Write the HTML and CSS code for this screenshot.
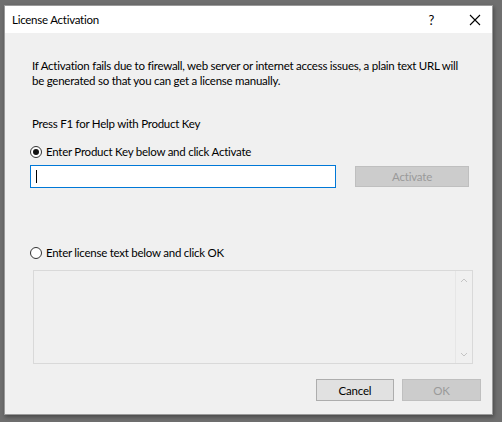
FILE: index.html
```html
<!DOCTYPE html>
<html lang="en">
<head>
    <meta charset="UTF-8">
    <meta name="viewport" content="width=device-width, initial-scale=1.0">
    <title>License Activation</title>
    <link rel="stylesheet" href="styles.css">
</head>
<body>
    <div class="dialog">
        <!-- Title bar -->
        <div class="titlebar">
            <span class="title">License Activation</span>
            <span class="help">?</span>
            <svg class="close" width="12" height="12" viewBox="0 0 12 12">
                <path d="M1 1 L11 11 M11 1 L1 11" stroke="#000" stroke-width="1.1" fill="none"/>
            </svg>
        </div>

        <div class="content">
            <p class="intro">If Activation fails due to firewall, web server or internet access issues, a plain text URL will be generated so that you can get a license manually.</p>

            <p class="hint">Press F1 for Help with Product Key</p>

            <label class="radio-row first">
                <span class="radio checked"></span>
                Enter Product Key below and click Activate
            </label>

            <div class="key-row">
                <div class="key-input"><span class="caret"></span></div>
                <button class="btn disabled activate">Activate</button>
            </div>

            <label class="radio-row second">
                <span class="radio"></span>
                Enter license text below and click OK
            </label>

            <div class="license-text">
                <div class="scrollbar">
                    <svg width="8" height="5" viewBox="0 0 8 5"><path d="M1 4 L4 1 L7 4" stroke="#c4c4c4" fill="none"/></svg>
                    <svg width="8" height="5" viewBox="0 0 8 5"><path d="M1 1 L4 4 L7 1" stroke="#c4c4c4" fill="none"/></svg>
                </div>
            </div>

            <div class="actions">
                <button class="btn cancel">Cancel</button>
                <button class="btn disabled ok">OK</button>
            </div>
        </div>
    </div>
</body>
</html>
```
FILE: styles.css
```css
body {
    margin: 0;
    background-color: #6f6f6f;
    font-family: Lato, "Noto Sans", sans-serif;
    font-size: 11.5px;
    letter-spacing: -0.25px;
    color: #000;
    height: 422px;
    overflow: hidden;
}

.dialog {
    margin: 5px 9px 0 4px;
    width: 489px;
    height: 410px;
    background-color: #f0f0f0;
    box-sizing: border-box;
    border: 1px solid #9a9a9a;
    box-shadow: 1px 2px 4px rgba(0, 0, 0, 0.35);
    display: flex;
    flex-direction: column;
}

.titlebar {
    height: 27px;
    background-color: #fff;
    display: flex;
    align-items: center;
    padding-left: 7px;
    padding-right: 11px;
}

.title {
    flex: 1;
}

.help {
    margin-right: 35px;
    font-size: 13px;
}

.close {
    display: block;
}

.content {
    padding: 0 11px 0 25px;
    display: flex;
    flex-direction: column;
}

p {
    margin: 0;
    line-height: 15px;
}

.intro {
    margin-top: 25px;
    margin-left: 2px;
    padding-right: 14px;
}

.hint {
    margin-top: 28px;
    margin-left: 2px;
}

.radio-row {
    display: flex;
    align-items: center;
    line-height: 15px;
    height: 15px;
}

.radio-row.first {
    margin-top: 13px;
}

.radio-row.second {
    margin-top: 57px;
}

.radio {
    width: 10px;
    height: 10px;
    border: 1px solid #333;
    border-radius: 50%;
    background-color: #fff;
    margin-right: 4px;
    position: relative;
}

.radio.checked::after {
    content: "";
    position: absolute;
    left: 2px;
    top: 2px;
    width: 6px;
    height: 6px;
    border-radius: 50%;
    background-color: #111;
}

.key-row {
    display: flex;
    align-items: flex-start;
    margin-top: 6px;
}

.key-input {
    width: 304px;
    height: 21px;
    border: 1px solid #0078d7;
    background-color: #fff;
    position: relative;
}

.caret {
    position: absolute;
    left: 5px;
    top: 4px;
    width: 1px;
    height: 13px;
    background-color: #000;
}

.btn {
    font-family: inherit;
    font-size: 11.5px;
    letter-spacing: -0.2px;
    height: 22px;
    padding: 0;
    border: 1px solid #adadad;
    background-color: #e1e1e1;
    color: #000;
    box-sizing: border-box;
}

.btn.disabled {
    background-color: #cccccc;
    border-color: #bfbfbf;
    color: #9a9a9a;
}

.activate {
    margin-left: 19px;
    margin-top: 1px;
    width: 114px;
    height: 21px;
}

.license-text {
    margin-top: 10px;
    margin-left: 3px;
    width: 440px;
    height: 94px;
    box-sizing: border-box;
    border: 1px solid #d9d9d9;
    display: flex;
    justify-content: flex-end;
}

.scrollbar {
    width: 16px;
    border-left: 1px solid #e6e6e6;
    display: flex;
    flex-direction: column;
    justify-content: space-between;
    align-items: center;
    padding: 7px 0 6px;
}

.scrollbar svg {
    display: block;
}

.actions {
    display: flex;
    justify-content: flex-end;
    gap: 8px;
    margin-top: 15px;
}

.cancel {
    width: 78px;
}

.ok {
    width: 79px;
}
```
